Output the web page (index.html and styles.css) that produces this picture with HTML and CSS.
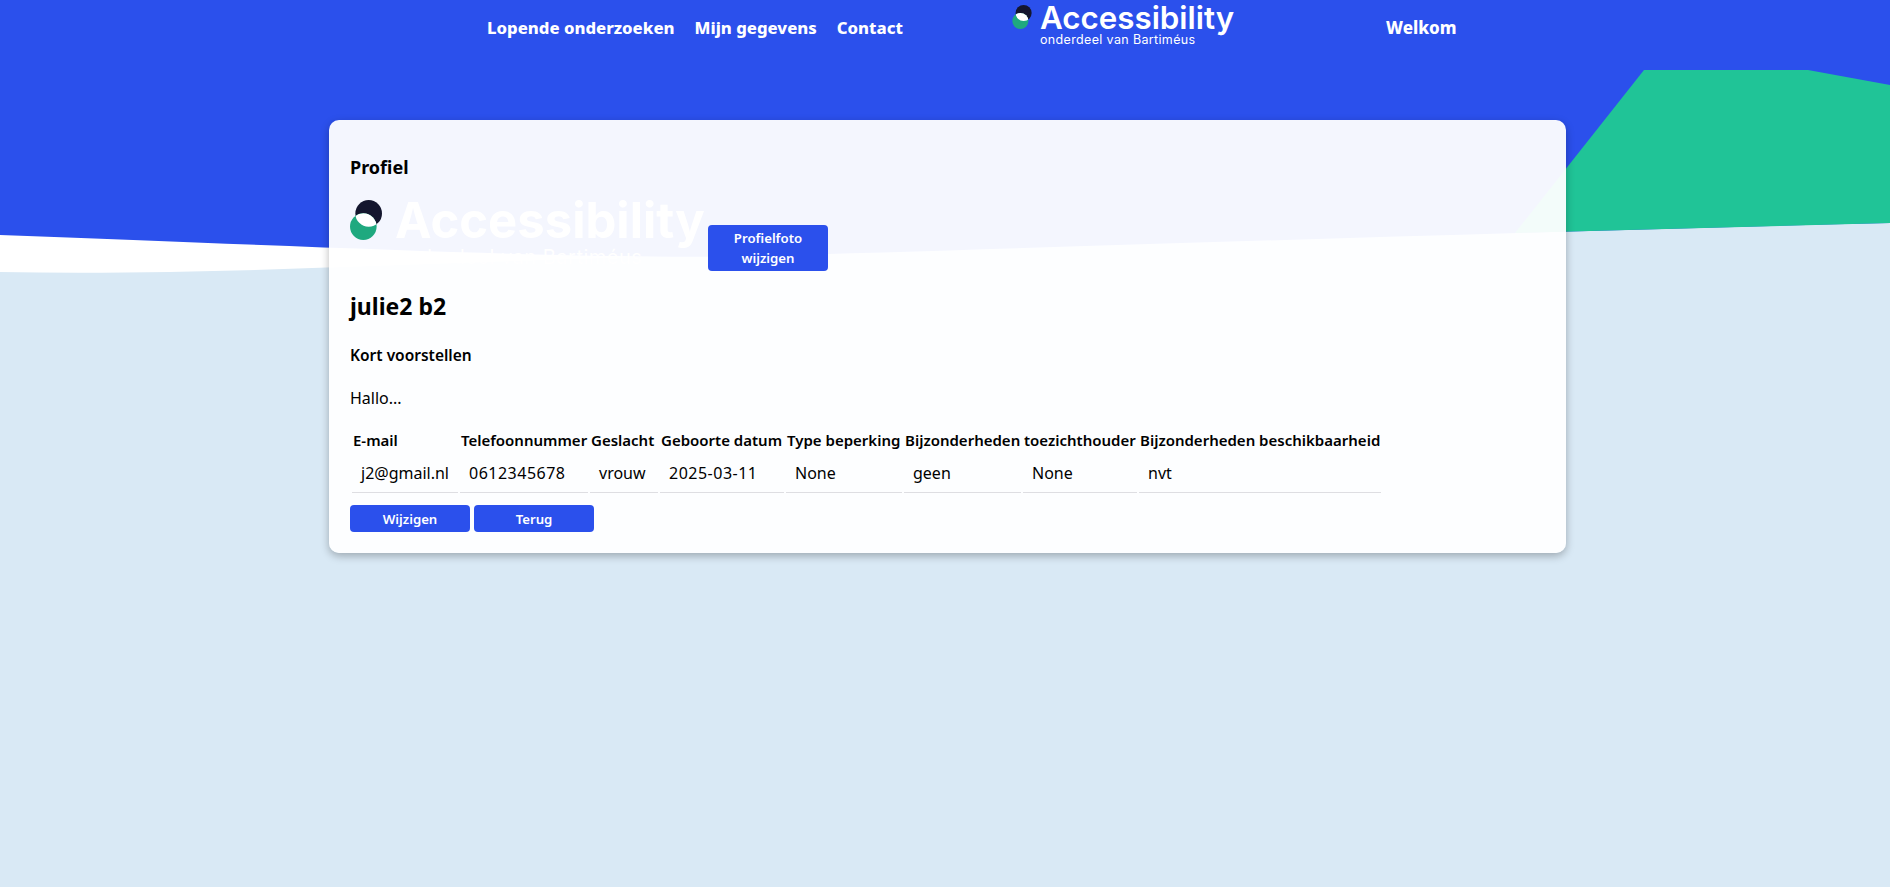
FILE: index.html
```html
<!DOCTYPE html>
<html lang="nl">
<head>
    <meta charset="UTF-8">
    <title>Profiel</title>
    <link rel="stylesheet" href="styles.css">
</head>
<body>
    <svg class="backdrop" viewBox="0 0 1890 887" preserveAspectRatio="none" aria-hidden="true">
        <path fill="#ffffff" d="M0 272 C120 274 240 271 340 267 C520 260 700 255 900 248 L900 220 L0 220 Z"/>
        <path fill="#2b50ec" d="M0 0 H1890 V223 C1500 232 1050 248 760 256 C600 260 350 248 0 235 Z"/>
        <path fill="#20c497" d="M1644 70 H1808 L1890 85 V223 L1515 233 Z"/>
    </svg>

    <header class="topbar">
        <nav class="topnav">
            <a href="#">Lopende onderzoeken</a>
            <a href="#">Mijn gegevens</a>
            <a href="#">Contact</a>
        </nav>
        <a class="brand" href="#">
            <svg class="brand-icon" viewBox="0 0 32.2 40">
                <defs>
                    <clipPath id="lensTop"><circle cx="18.8" cy="13.4" r="13.4"/></clipPath>
                </defs>
                <circle fill="#14162e" cx="18.8" cy="13.4" r="13.4"/>
                <circle fill="#1fa97f" cx="13.4" cy="26.6" r="13.4"/>
                <circle fill="#fff" cx="13.4" cy="26.6" r="13.4" clip-path="url(#lensTop)"/>
            </svg>
            <span class="brand-text">
                <span class="brand-name">Accessibility</span>
                <span class="brand-sub">onderdeel van Bartiméus</span>
            </span>
        </a>
        <a class="welcome" href="#">Welkom</a>
    </header>

    <main class="card">
        <h3 class="card-title">Profiel</h3>
        <div class="photo-row">
            <div class="photo">
                <svg class="photo-icon" viewBox="0 0 32.2 40">
                    <defs>
                        <clipPath id="lensBig"><circle cx="18.8" cy="13.4" r="13.4"/></clipPath>
                    </defs>
                    <circle fill="#14162e" cx="18.8" cy="13.4" r="13.4"/>
                    <circle fill="#1fa97f" cx="13.4" cy="26.6" r="13.4"/>
                    <circle fill="#fff" cx="13.4" cy="26.6" r="13.4" clip-path="url(#lensBig)"/>
                </svg>
                <span class="photo-text">
                    <span class="photo-name">Accessibility</span>
                    <span class="photo-sub">onderdeel van Bartiméus</span>
                </span>
            </div>
            <button class="btn btn-photo" type="button">Profielfoto wijzigen</button>
        </div>
        <h2 class="person">julie2 b2</h2>
        <h4 class="intro-title">Kort voorstellen</h4>
        <p class="intro">Hallo...</p>
        <table class="details">
            <thead>
                <tr>
                    <th class="col-mail">E-mail</th>
                    <th class="col-phone">Telefoonnummer</th>
                    <th class="col-gender">Geslacht</th>
                    <th class="col-birth">Geboorte datum</th>
                    <th class="col-type">Type beperking</th>
                    <th class="col-sup">Bijzonderheden</th>
                    <th class="col-watch">toezichthouder</th>
                    <th class="col-avail">Bijzonderheden beschikbaarheid</th>
                </tr>
            </thead>
            <tbody>
                <tr>
                    <td>j2@gmail.nl</td>
                    <td class="num">0612345678</td>
                    <td>vrouw</td>
                    <td class="num">2025-03-11</td>
                    <td>None</td>
                    <td>geen</td>
                    <td>None</td>
                    <td>nvt</td>
                </tr>
            </tbody>
        </table>
        <div class="actions">
            <button class="btn" type="button">Wijzigen</button>
            <button class="btn" type="button">Terug</button>
        </div>
    </main>
</body>
</html>
```

FILE: styles.css
```css
* {
    box-sizing: border-box;
}

html, body {
    margin: 0;
    height: 887px;
    overflow: hidden;
}

body {
    position: relative;
    font-family: "Noto Sans", Arial, sans-serif;
    background: #d9e9f5;
    color: #000;
}

/* Wavy shapes behind everything */
.backdrop {
    position: absolute;
    top: 0;
    left: 0;
    width: 100%;
    height: 100%;
}

.topbar {
    position: relative;
    display: flex;
    height: 120px;
    padding-left: 487px;
    align-items: flex-start;
}

.topbar a {
    color: #fff;
    text-decoration: none;
}

.topnav {
    display: flex;
    gap: 20px;
    padding-top: 16px;
    font-size: 16.7px;
    font-weight: 800;
    width: 525px;
}

.brand {
    display: flex;
    gap: 8px;
    width: 374px;
    padding-top: 5px;
}

.brand-icon {
    width: 20px;
    height: 24px;
}

.brand-text {
    display: flex;
    flex-direction: column;
}

.brand-name {
    font-family: Inter, sans-serif;
    font-size: 31.3px;
    font-weight: 600;
    line-height: 24px;
    margin-top: 1px;
}

.brand-sub {
    font-family: Inter, sans-serif;
    font-size: 12.5px;
    letter-spacing: 0.35px;
    line-height: 14px;
    margin-top: 3px;
}

.welcome {
    padding-top: 16px;
    font-size: 17px;
    font-weight: 800;
}

.card {
    position: relative;
    width: 1237px;
    height: 433px;
    margin-left: 329px;
    padding: 35px 21px 0;
    background: rgba(255, 255, 255, 0.95);
    border-radius: 10px;
    box-shadow: 0 3px 8px rgba(0, 0, 0, 0.28);
}

.card-title {
    margin: 0;
    font-size: 18px;
    font-weight: 700;
    line-height: 24px;
}

.photo-row {
    display: flex;
    align-items: flex-end;
    margin-top: 18px;
    height: 80px;
}

.photo {
    display: flex;
    gap: 13px;
    width: 358px;
    height: 80px;
}

.photo-icon {
    flex: none;
    width: 32px;
    height: 40px;
    margin-top: 3px;
}

.photo-text {
    display: flex;
    flex-direction: column;
    color: #fff;
}

.photo-name {
    font-family: Inter, sans-serif;
    font-size: 49px;
    font-weight: 700;
    line-height: 48px;
}

.photo-sub {
    font-family: Inter, sans-serif;
    font-size: 20px;
    letter-spacing: 0.5px;
    line-height: 24px;
}

.btn {
    width: 120px;
    height: 27px;
    padding: 0;
    border: none;
    border-radius: 4px;
    background: #2b50ec;
    color: #fff;
    font-family: inherit;
    font-size: 13.2px;
    font-weight: 600;
}

.btn-photo {
    height: 46px;
    line-height: 20px;
    margin-bottom: 6px;
}

.person {
    margin: 13px 0 0;
    font-size: 23px;
    font-weight: 700;
    line-height: 32px;
}

.intro-title {
    margin: 22px 0 0;
    font-size: 15.5px;
    font-weight: 600;
    line-height: 22px;
}

.intro {
    margin: 21px 0 0;
    font-size: 16px;
    line-height: 22px;
}

.details {
    margin-top: 17px;
    border-spacing: 2px;
    table-layout: fixed;
    width: 1033px;
    font-size: 16px;
}

.details th {
    padding: 1px;
    text-align: left;
    font-size: 15px;
    font-weight: 600;
    white-space: nowrap;
    line-height: 22px;
}

.col-mail { width: 106px; }
.col-phone { width: 128px; }
.col-gender { width: 68px; }
.col-birth { width: 124px; }
.col-type { width: 116px; }
.col-sup { width: 117px; }
.col-watch { width: 114px; }
.col-avail { width: 242px; }

.details td {
    padding: 8px 8px 8px 9px;
    line-height: 22px;
    border-bottom: 1px solid #dedee2;
}

.details .num {
    letter-spacing: 0.5px;
}

.actions {
    display: flex;
    gap: 4px;
    margin-top: 10px;
}
```
